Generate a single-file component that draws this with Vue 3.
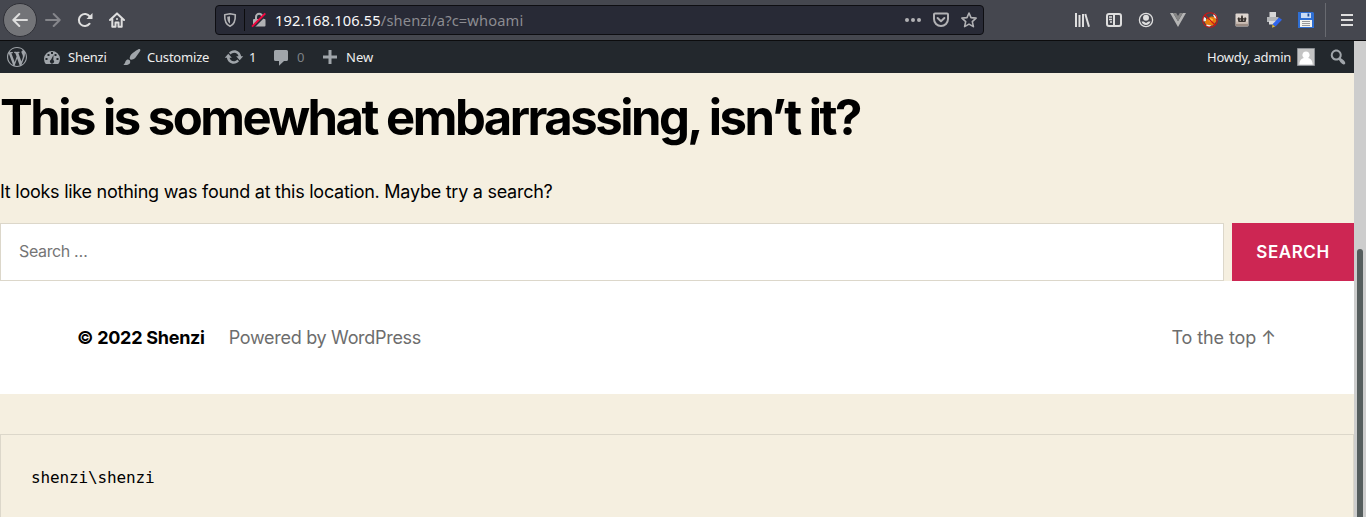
<script setup>
const wp = {
  logo: 'M20 10c0-5.51-4.49-10-10-10C4.48 0 0 4.49 0 10c0 5.52 4.48 10 10 10 5.51 0 10-4.48 10-10zM7.78 15.37L4.37 6.22c.55-.02 1.17-.08 1.17-.08.5-.06.44-1.13-.06-1.11 0 0-1.45.11-2.37.11-.18 0-.37 0-.58-.01C4.12 2.69 6.87 1.11 10 1.11c2.33 0 4.45.87 6.05 2.34-.68-.11-1.65.39-1.65 1.58 0 .74.45 1.36.9 2.1.35.61.55 1.36.55 2.46 0 1.49-1.4 5-1.4 5l-3.03-8.37c.54-.02.82-.17.82-.17.5-.05.44-1.25-.06-1.22 0 0-1.44.12-2.38.12-.87 0-2.33-.12-2.33-.12-.5-.03-.56 1.2-.06 1.22l.92.08 1.26 3.41zM17.41 10c.24-.64.74-1.87.43-4.25.7 1.29 1.05 2.71 1.05 4.25 0 3.29-1.73 6.24-4.4 7.78.97-2.59 1.94-5.2 2.92-7.78zM6.1 18.09C3.12 16.65 1.11 13.53 1.11 10c0-1.3.23-2.48.72-3.59C3.25 10.3 4.67 14.2 6.1 18.09zm4.03-6.63l2.58 6.98c-.86.29-1.76.45-2.71.45-.79 0-1.57-.11-2.29-.33.81-2.38 1.62-4.74 2.42-7.1z',
  brush: 'M18.33 3.57s.27-.8-.31-1.36c-.53-.52-1.22-.24-1.22-.24-.61.3-5.76 3.47-7.67 5.57-.86.96-2.06 3.79-1.09 4.82.92.98 3.96-.17 4.79-1 2.06-2.06 5.21-7.17 5.5-7.79zM1.4 17.65c2.37-1.56 1.46-3.41 3.23-4.64.93-.65 2.22-.62 3.08.29.63.67.8 2.57-.16 3.46-1.57 1.45-4 1.55-6.15.89z',
  update: 'M10.2 3.28c3.53 0 6.43 2.61 6.92 6h2.08l-3.5 4-3.5-4h2.32c-.45-1.97-2.21-3.45-4.32-3.45-1.45 0-2.73.71-3.54 1.78L4.95 5.66C6.23 4.2 8.11 3.28 10.2 3.28zm-.4 13.44c-3.52 0-6.43-2.61-6.92-6H.8l3.5-4c1.17 1.33 2.33 2.67 3.5 4H5.48c.45 1.97 2.21 3.45 4.32 3.45 1.45 0 2.73-.71 3.54-1.78l1.71 1.95c-1.28 1.46-3.15 2.38-5.25 2.38z',
  comment: 'M4.500 3h11a1.500 1.500 0 0 1 1.500 1.500v8a1.500 1.500 0 0 1-1.500 1.500H13l-5 4.800V14H4.500A1.500 1.500 0 0 1 3 12.500v-8A1.500 1.500 0 0 1 4.500 3z',
  plus: 'M17 8.5v3h-5.5V17h-3v-5.5H3v-3h5.5V3h3v5.5z',
  search: 'M12.14 4.18c1.87 1.87 2.11 4.75.72 6.89.12.1.22.21.36.31.2.16.47.36.81.59.34.24.56.39.66.47.42.31.73.57.94.78.32.32.6.65.84 1 .25.35.44.69.59 1.04.14.35.21.68.18 1-.02.32-.14.59-.36.81s-.49.34-.81.36c-.31.02-.65-.04-.99-.19-.35-.14-.7-.34-1.04-.59-.35-.24-.68-.52-1-.84-.21-.21-.47-.52-.77-.93-.1-.13-.25-.35-.47-.66-.22-.32-.4-.57-.56-.78-.16-.2-.29-.35-.44-.5-2.07 1.09-4.69.76-6.44-.98-2.14-2.15-2.14-5.64 0-7.78 2.15-2.15 5.63-2.15 7.78 0zm-1.41 6.36c1.36-1.37 1.36-3.58 0-4.95-1.37-1.37-3.59-1.37-4.95 0-1.37 1.37-1.37 3.58 0 4.95 1.36 1.37 3.58 1.37 4.95 0z'
}
</script>

<template>
  <div class="window">
    <header class="toolbar">
      <nav class="nav">
        <button class="back" aria-label="Back">
          <svg class="ic" viewBox="0 0 16 16"><path class="line" d="M15 8H1.5M7.3 2 1.3 8l6 6" /></svg>
        </button>
        <svg class="ic dim" viewBox="0 0 16 16"><path class="line" d="M1 8h13.5M8.7 2l6 6-6 6" /></svg>
        <svg class="ic" viewBox="0 0 16 16"><path class="line" d="M12.6 11.7A6 6 0 1 1 12.8 4.6" /><path d="M15.5 1v5.6a.5.5 0 0 1-.5.5H9.5z" /></svg>
        <svg class="ic" viewBox="0 0 16 16"><path class="line" d="M1 8l7-6.6L15 8M3.3 7v7.7h3.2v-4.2h3v4.2h3.2V7" /><circle cx="8" cy="7" r="1" /></svg>
      </nav>

      <div class="urlbar">
        <svg class="ic shield" viewBox="0 0 16 16"><path class="line" d="M8 1.800 13.300 2.700c.2 5.500-1.100 9.800-5.300 11.600C3.800 12.500 2.500 8.200 2.700 2.700z" /><path d="M8 4.300v7.500C6 10.300 5.200 7.800 5.200 4.700z" /></svg>
        <span class="divider"></span>
        <svg class="ic lock" viewBox="0 0 16 16"><path d="M3 7h10.500a1 1 0 0 1 1 1v5.500a1 1 0 0 1-1 1H3a1 1 0 0 1-1-1V8a1 1 0 0 1 1-1z" /><path class="line" d="M5 7V5a3.200 3.200 0 0 1 6.400 0v2" /><path class="gap" d="M1.500 15.500 15.500 1.500" /><path class="slash" d="M1 14.700 14.300 1.300" /></svg>
        <span class="url"><b>192.168.106.55</b>/shenzi/a?c=whoami</span>
        <svg class="ic" viewBox="0 0 16 16"><circle cx="2" cy="8" r="2" /><circle cx="8" cy="8" r="2" /><circle cx="14" cy="8" r="2" /></svg>
        <svg class="ic pocket" viewBox="0 0 16 16"><path class="line" d="M2 1.500h12a1 1 0 0 1 1 1V7a7 7 0 0 1-14 0V2.500a1 1 0 0 1 1-1zM4.600 6 8 9.300 11.400 6" /></svg>
        <svg class="ic star" viewBox="0 0 16 16"><path class="line" d="m8 1 2 4.600 5.100.5-3.800 3.500 1.100 5L8 12.100l-4.400 2.500 1.100-5L.9 6.100 6 5.600z" /></svg>
      </div>

      <div class="tools">
        <svg class="ic" viewBox="0 0 16 16"><path class="line flat" d="M2 1v14M5.500 3v12M9 2v13M11.300 2l3.700 12.800" /></svg>
        <svg class="ic" viewBox="0 0 16 16"><rect class="line" x="1" y="2" width="14" height="12" rx="2" /><path class="line" d="M8 2v12" /><path class="thin" d="M3 5h3M3 7.500h3M4 10h2" /></svg>
        <svg class="ic" viewBox="0 0 16 16"><circle class="thin" cx="8" cy="8" r="6.600" /><circle cx="8" cy="5.800" r="3" /><path d="M3.500 9.600h2L8 10.900l2.500-1.300h2A5 5 0 0 1 8 13a5 5 0 0 1-4.500-3.400z" /></svg>
        <svg class="ic" viewBox="0 0 16 16"><path fill="#b5b5b5" d="M0 1h3.200L8 9.300 12.800 1H16L8 15z" /><path fill="#858585" d="M3.200 1h3L8 4.100 9.800 1h3L8 9.300z" /></svg>
        <svg class="ic" viewBox="0 0 16 16"><path fill="#e87b0c" d="M2.500 8.500 5.500 6.500 9 4.500l4 .5 1.500 4-3.500 4.500-5.500.3L3 11z" /><path fill="#eee" d="m1 4.500 3 1.500v3l-2.700.5zm10-1.500 1.500-1.500 2.500 3-.3 2.500-2-1zm-6.500 9.500 5 1-2.500 1.500-3-1z" /><path fill="#ffc345" d="M8 6l3 1-1 3-3-1z" /><circle class="ban" cx="8" cy="8" r="7.300" /><path class="ban" d="m3 3 10 10" /></svg>
        <svg class="ic" viewBox="0 0 16 16"><rect x="1.500" y="1.500" width="13" height="13" rx="1" fill="#ddd5cf" /><path fill="#9c8d84" d="M2 11.500h12V14H2z" /><path fill="#cbbdb3" d="M2 9.500h12v2H2z" /><path fill="#39332f" d="M3.500 6.500 5 5l.8 1.500L7 6l.3-2.500h1.400L9 6l1.200.5L11 5l1.500 1.500-1 3.500h-7z" /><path fill="#d5ccc5" d="M5.800 7.500h1v1.300h-1zm3.400 0h1v1.300h-1z" /></svg>
        <svg class="ic" viewBox="0 0 16 16"><path fill="#d8d8d8" d="M3.500 0H10v5H3.500z" /><path fill="#b4b6b8" d="M1 5h11.500v5H1z" /><path fill="#ddd" d="M3 9h7v3.500H3z" /><path fill="#2f66ee" d="m13 5.500 3 2.300-6.500 6.700-3-2.200z" /><path fill="#d8b93e" d="m6.500 12.500 2.700 2L6 15.700z" /></svg>
        <svg class="ic" viewBox="0 0 16 16"><path fill="#2f6fd3" d="M0 0h15l1 1v15H0z" /><path fill="#c9dcf5" d="M3 1h10v5H3z" /><path fill="#1c4f9e" d="M9.500 1.500h1.800v3H9.500z" /><path fill="#f4f4ef" d="M2 8h12v7H2z" /><path stroke="#999" d="M4 9.500h8M4 11.500h8M4 13.500h8" /></svg>
        <span class="tool-divider"></span>
        <svg class="ic" viewBox="0 0 16 16"><path class="line flat" d="M2 3h12M2 8h12M2 13h12" /></svg>
      </div>
    </header>

    <div class="viewport">
      <div class="page">
        <div class="adminbar">
          <svg class="wp logo" viewBox="0 0 20 20"><path :d="wp.logo" /></svg>
          <a class="dash"><svg class="wp" viewBox="0 0 20 20"><path fill-rule="evenodd" d="M3.760 17h12.480A8 8 0 1 0 3.760 17zM9 5h2v2H9zM5.500 7h2v2h-2zm7 0h2v2h-2zM3.500 11h2v2h-2zm11 0h2v2h-2zM11.500 8l-.2 5a2 2 0 1 1-2.300-.2z" /></svg>Shenzi</a>
          <a class="custom"><svg class="wp" viewBox="0 0 20 20"><path :d="wp.brush" /></svg>Customize</a>
          <a class="updates"><svg class="wp" viewBox="0 0 20 20"><path :d="wp.update" /></svg>1</a>
          <a class="comments"><svg class="wp" viewBox="0 0 20 20"><path :d="wp.comment" /></svg><span>0</span></a>
          <a class="new"><svg class="wp" viewBox="0 0 20 20"><path :d="wp.plus" /></svg>New</a>
          <a class="account">Howdy, admin<svg class="avatar" viewBox="0 0 18 18"><path fill="#c4c4c4" stroke="#8c8f94" d="M.5.5h17v17H.5z" /><path fill="#fff" d="M9 3.500a3.600 3.600 0 0 1 2.200 6.500c2.800.7 4.300 2.600 4.500 6.500H2.300c.2-3.900 1.700-5.800 4.500-6.500A3.600 3.600 0 0 1 9 3.500z" /></svg></a>
          <svg class="wp find" viewBox="0 0 20 20"><path :d="wp.search" /></svg>
        </div>

        <main>
          <h1>This is somewhat embarrassing, isn’t it?</h1>
          <p>It looks like nothing was found at this location. Maybe try a search?</p>
          <form class="search" @submit.prevent>
            <input type="text" placeholder="Search …" />
            <button>SEARCH</button>
          </form>
        </main>

        <footer>
          <strong>© 2022 Shenzi</strong>
          <span class="powered">Powered by WordPress</span>
          <span class="top">To the top <span class="arrow">↑</span></span>
        </footer>

        <pre>shenzi\shenzi</pre>
      </div>
      <div class="scrollbar"><div class="thumb"></div></div>
    </div>
  </div>
</template>

<style>
html, body { overflow: hidden; }
</style>

<style scoped>
* { box-sizing: border-box; }
.window { width: 1366px; height: 517px; display: flex; flex-direction: column; overflow: hidden; background: #f5efe0; }
button, input { font: inherit; border: 0; padding: 0; margin: 0; }
svg { display: block; flex: none; }

.toolbar { height: 41px; flex: none; display: flex; align-items: center; background: #45474f; border-bottom: 1px solid #0c0c0d; }
.ic { width: 16px; height: 16px; fill: #dedede; color: #dedede; }
.line { fill: none; stroke: currentColor; stroke-width: 2; stroke-linejoin: round; stroke-linecap: round; }
.flat { stroke-linecap: butt; }
.thin { fill: none; stroke: currentColor; stroke-width: 1.3; }
.ban { fill: none; stroke: #cf1414; stroke-width: 1.1; }
.nav { display: flex; align-items: center; gap: 16px; width: 215px; padding-left: 3px; }
.back { width: 34px; height: 34px; margin-right: -8px; display: flex; align-items: center; justify-content: center; border-radius: 50%; background: #737478; border: 1px solid #303138; }
.dim { color: #85868b; }
.urlbar { width: 769px; height: 30px; display: flex; align-items: center; padding: 0 6px; border: 1px solid #0e0e12; border-radius: 4px; background: #282a36; }
.urlbar .ic { fill: #b1b1b4; color: #b1b1b4; }
.divider { width: 1px; height: 22px; margin: 0 6px; background: #0c0c0d; }
.urlbar .gap { stroke: #282a36; stroke-width: 3; }
.urlbar .slash { stroke: #f3063f; stroke-width: 1.900; }
.shield .line { stroke-width: 1.600; }
.url { flex: 1; margin-left: 8px; font: 14.670px/20px "Noto Sans", sans-serif; letter-spacing: .13px; color: #8c8c91; white-space: nowrap; }
.url b { font-weight: 400; color: #f9f9fa; }
.pocket, .star { margin-left: 12px; }
.star .line { stroke-width: 1.600; }
.tools { display: flex; align-items: center; gap: 16px; margin-left: 90px; }
.tool-divider { width: 1px; height: 34px; margin: 0 -4px 0 -5px; background: #686a70; }
.tool-divider + .ic { margin-left: 1px; }

.viewport { flex: 1; min-height: 0; display: flex; }
.page { width: 1354px; display: flex; flex-direction: column; font-family: Inter, sans-serif; color: #000; }
.scrollbar { width: 12px; padding: 208px 3px 0; background: #cdcdcd; }
.thumb { height: 300px; border-radius: 3px; background: #555d5d; }

.adminbar { height: 32px; flex: none; display: flex; align-items: center; background: #23282d; color: #eee; font: 13px/32px "Noto Sans", sans-serif; padding-left: 7px; }
.adminbar a { display: flex; align-items: center; white-space: nowrap; }
.wp { width: 20px; height: 20px; fill: #a0a5aa; }
.dash { width: 80px; margin-left: 15px; gap: 6px; letter-spacing: -.250px; }
.custom { width: 102px; gap: 5px; letter-spacing: -.200px; }
.updates { width: 47px; gap: 5px; }
.comments { width: 49px; gap: 6px; }
.comments span { color: #7d8185; }
.new { gap: 6px; }
.account { margin-left: auto; gap: 6px; letter-spacing: -.28px; }
.avatar { width: 18px; height: 18px; }
.find { margin: 0 6px 0 13px; }

main { height: 208px; flex: none; padding-top: 15px; }
h1 { margin: 0; font-size: 49px; line-height: 60px; font-weight: 700; letter-spacing: -2.51px; white-space: nowrap; }
p { margin: 31px 0 18px; font-size: 18px; line-height: 26px; letter-spacing: -.255px; }
.search { display: flex; gap: 8px; height: 58px; }
.search input { width: 1224px; border: 1px solid #dcd7ca; background: #fff; padding: 0 18px 2px; font-size: 16px; letter-spacing: -.360px; outline: 0; }
.search input::placeholder { color: #757575; opacity: 1; }
.search button { width: 122px; background: #cd2653; color: #fff; font-size: 17px; font-weight: 600; letter-spacing: .566px; }

footer { height: 113px; flex: none; display: flex; align-items: center; padding: 0 78px 0 77px; background: #fff; font-size: 18px; letter-spacing: -.300px; color: #6d6d6d; }
footer strong { color: #000; font-weight: 700; letter-spacing: -.27px; }
.powered { margin-left: 24px; }
.top { margin-left: auto; letter-spacing: -.1px; }
pre { flex: 1; margin: 40px 0 0; padding: 31px 30px; border: 1px solid #dcd7ca; border-bottom: 0; font: 16px/24px "DejaVu Sans Mono", monospace; letter-spacing: -.13px; }
</style>
